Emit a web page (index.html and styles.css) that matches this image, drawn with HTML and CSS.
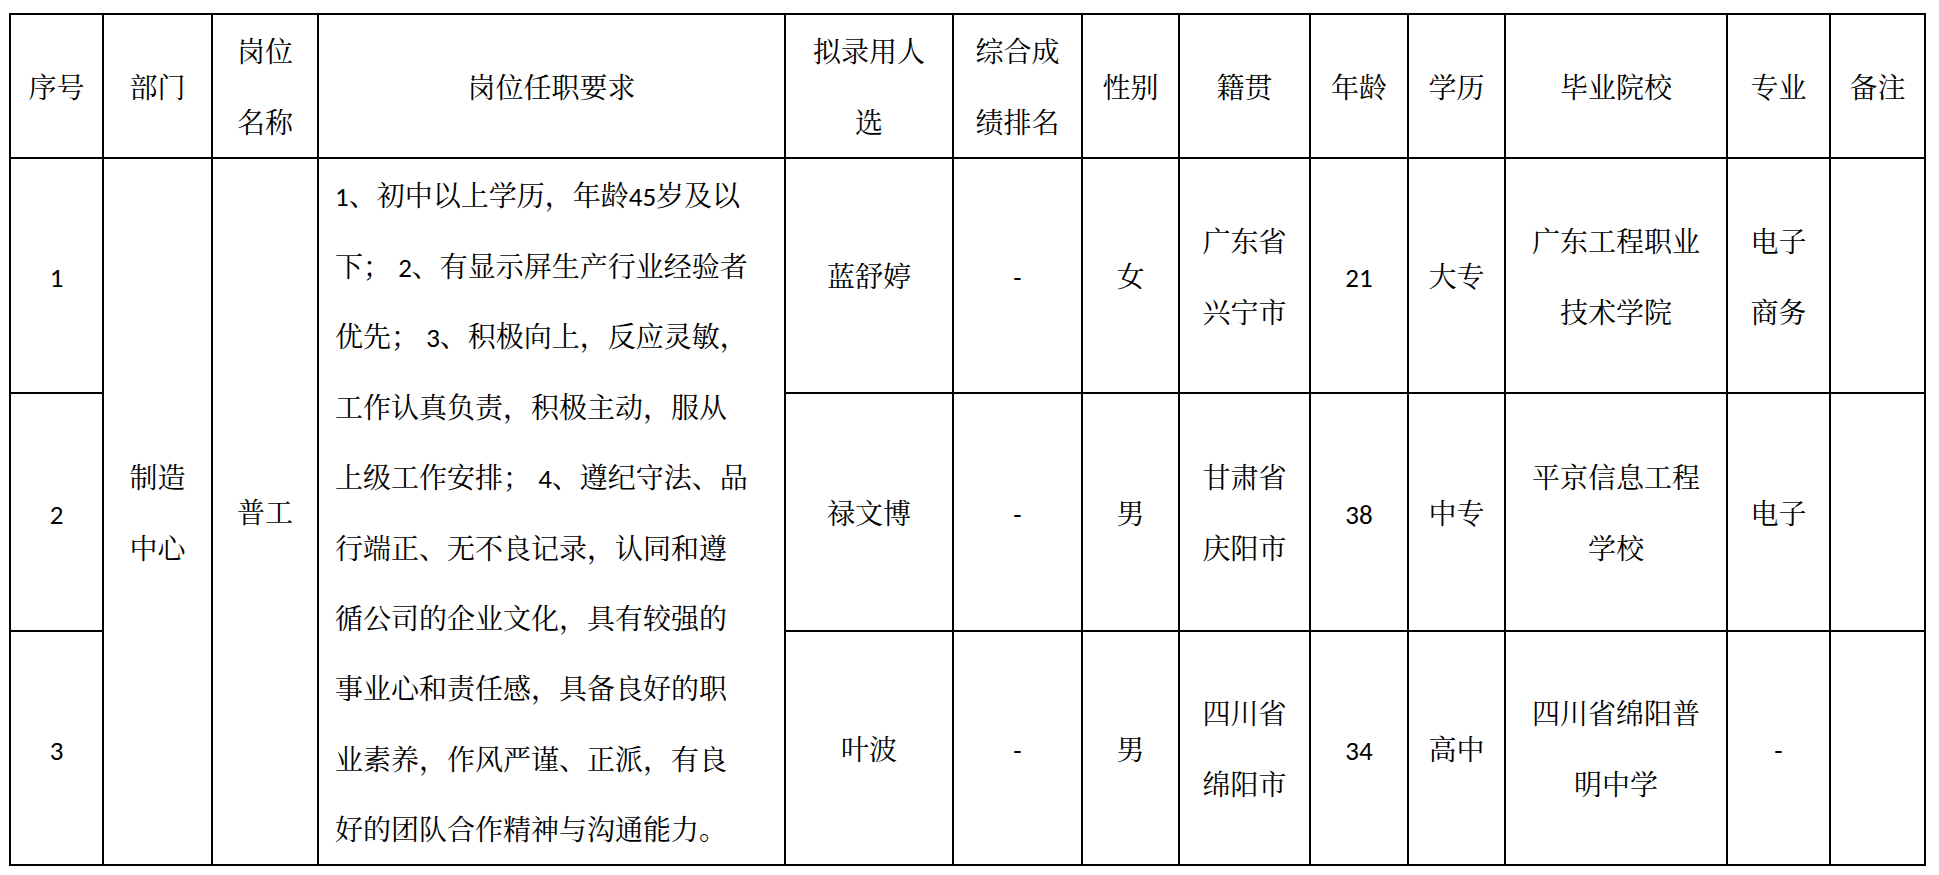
FILE: index.html
```html
<!DOCTYPE html>
<html lang="zh-CN">
<head>
<meta charset="utf-8">
<title>拟录用人员名单</title>
<link rel="stylesheet" href="styles.css">
</head>
<body>
<table class="roster">
  <colgroup>
    <col class="c-no"><col class="c-dept"><col class="c-post"><col class="c-req"><col class="c-name"><col class="c-rank"><col class="c-sex"><col class="c-home"><col class="c-age"><col class="c-edu"><col class="c-school"><col class="c-major"><col class="c-note">
  </colgroup>
  <thead>
    <tr class="row-head">
      <th>序号</th>
      <th>部门</th>
      <th>岗位<br>名称</th>
      <th>岗位任职要求</th>
      <th>拟录用人<br>选</th>
      <th>综合成<br>绩排名</th>
      <th>性别</th>
      <th>籍贯</th>
      <th>年龄</th>
      <th>学历</th>
      <th>毕业院校</th>
      <th>专业</th>
      <th>备注</th>
    </tr>
  </thead>
  <tbody>
    <tr class="row-1">
      <td><span class="num">1</span></td>
      <td rowspan="3">制造<br>中心</td>
      <td rowspan="3">普工</td>
      <td rowspan="3" class="req"><span class="num">1</span>、初中以上学历，年龄<span class="num">45</span>岁及以<br>下； <span class="num">2</span>、有显示屏生产行业经验者<br>优先； <span class="num">3</span>、积极向上，反应灵敏，<br>工作认真负责，积极主动，服从<br>上级工作安排； <span class="num">4</span>、遵纪守法、品<br>行端正、无不良记录，认同和遵<br>循公司的企业文化，具有较强的<br>事业心和责任感，具备良好的职<br>业素养，作风严谨、正派，有良<br>好的团队合作精神与沟通能力。</td>
      <td>蓝舒婷</td>
      <td><span class="num">-</span></td>
      <td>女</td>
      <td>广东省<br>兴宁市</td>
      <td><span class="num">21</span></td>
      <td>大专</td>
      <td>广东工程职业<br>技术学院</td>
      <td>电子<br>商务</td>
      <td></td>
    </tr>
    <tr class="row-2">
      <td><span class="num">2</span></td>
      <td>禄文博</td>
      <td><span class="num">-</span></td>
      <td>男</td>
      <td>甘肃省<br>庆阳市</td>
      <td><span class="num">38</span></td>
      <td>中专</td>
      <td>平京信息工程<br>学校</td>
      <td>电子</td>
      <td></td>
    </tr>
    <tr class="row-3">
      <td><span class="num">3</span></td>
      <td>叶波</td>
      <td><span class="num">-</span></td>
      <td>男</td>
      <td>四川省<br>绵阳市</td>
      <td><span class="num">34</span></td>
      <td>高中</td>
      <td>四川省绵阳普<br>明中学</td>
      <td><span class="num">-</span></td>
      <td></td>
    </tr>
  </tbody>
</table>
</body>
</html>
```

FILE: styles.css
```css
html, body {
  margin: 0;
  padding: 0;
  background: #ffffff;
}

body {
  padding: 13px 0 0 9px;
}

.roster {
  border-collapse: collapse;
  table-layout: fixed;
  width: 1917px;
  color: #000000;
  font-family: "Noto Serif CJK SC", "Source Han Serif SC", "AR PL UMing CN", "Noto Sans CJK SC", serif;
  font-size: 28px;
  font-weight: 400;
}

.roster th,
.roster td {
  border: 2px solid #000000;
  padding: 0;
  text-align: center;
  vertical-align: middle;
  font-weight: 400;
  line-height: 71px;
  white-space: nowrap;
  overflow: hidden;
}

.c-no { width: 93px; }
.c-dept { width: 109px; }
.c-post { width: 106px; }
.c-req { width: 467px; }
.c-name { width: 168px; }
.c-rank { width: 129px; }
.c-sex { width: 97px; }
.c-home { width: 131px; }
.c-age { width: 98px; }
.c-edu { width: 97px; }
.c-school { width: 222px; }
.c-major { width: 103px; }
.c-note { width: 95px; }

.row-head { height: 143px; }
.row-1 { height: 235px; }
.row-2 { height: 238px; }
.row-3 { height: 234px; }

.roster td.req {
  text-align: left;
  padding: 0 0 0 16px;
  line-height: 70.4px;
}

.num {
  font-family: "Carlito", "Lato", "Liberation Sans", sans-serif;
  font-size: 27px;
  line-height: 1;
}
```
